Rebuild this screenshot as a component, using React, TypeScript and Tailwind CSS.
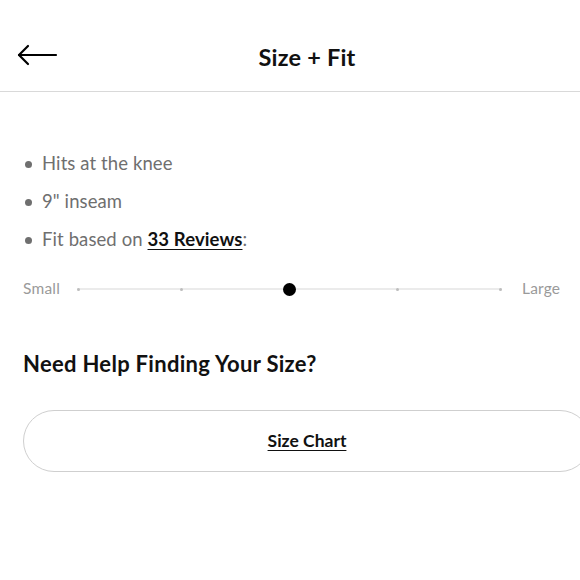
const items = ["Hits at the knee", '9" inseam'];

export default function App() {
  return (
    <div className="w-[580px] h-[580px] overflow-hidden bg-white font-['Lato',sans-serif]">
      <div className="w-[614px]">
        {/* Header */}
        <header className="relative h-[92px] border-b border-[#d9d9d9] flex justify-center pt-[42px]">
          <button className="absolute left-[16px] top-[44px] text-black">
            <svg width="42" height="22" viewBox="0 0 42 22" fill="none" stroke="currentColor" strokeWidth="2.2" strokeLinecap="round" strokeLinejoin="round">
              <path d="M40 11H3" />
              <path d="M12 2L3 11l9 9" />
            </svg>
          </button>
          <h1 className="text-[23.5px] leading-[30px] font-bold text-[#111] tracking-[0.2px]">Size + Fit</h1>
        </header>

        <div className="px-[23px]">
          {/* Bullets */}
          <ul className="pt-[53px] text-[18.5px] text-[#6f6f6f] tracking-[0.1px]">
            {items.map((t) => (
              <li key={t} className="h-[38px] flex items-center gap-[10px] pl-[2px]">
                <span className="w-[7px] h-[7px] rounded-full bg-[#6f6f6f]" />
                {t}
              </li>
            ))}
            <li className="h-[38px] flex items-center gap-[10px] pl-[2px]">
              <span className="w-[7px] h-[7px] rounded-full bg-[#6f6f6f]" />
              <span>
                Fit based on{" "}
                <span className="font-bold text-[#111] underline underline-offset-[3px]">33 Reviews</span>:
              </span>
            </li>
          </ul>

          {/* Slider */}
          <div className="mt-[20px] h-[20px] flex items-center text-[15.5px] text-[#9a9a9a] tracking-[0.2px]">
            <span className="w-[54px]">Small</span>
            <div className="relative w-[425px] h-[2px] bg-[#ebebeb] flex items-center justify-between">
              <span className="w-[3px] h-[3px] rounded-full bg-[#bdbdbd]" />
              <span className="w-[3px] h-[3px] rounded-full bg-[#bdbdbd]" />
              <span className="w-[13px] h-[13px] rounded-full bg-black" />
              <span className="w-[3px] h-[3px] rounded-full bg-[#bdbdbd]" />
              <span className="w-[3px] h-[3px] rounded-full bg-[#bdbdbd]" />
            </div>
            <span className="ml-[20px]">Large</span>
          </div>

          {/* Help */}
          <h2 className="mt-[51px] text-[22px] leading-[28px] font-bold text-[#111] tracking-[0.3px]">Need Help Finding Your Size?</h2>

          <button className="mt-[32px] w-full h-[62px] rounded-full border-[1.5px] border-[#cfcfcf] flex items-center justify-center">
            <span className="text-[17.5px] font-bold text-[#111] underline underline-offset-[3px]">Size Chart</span>
          </button>
        </div>
      </div>
    </div>
  );
}
